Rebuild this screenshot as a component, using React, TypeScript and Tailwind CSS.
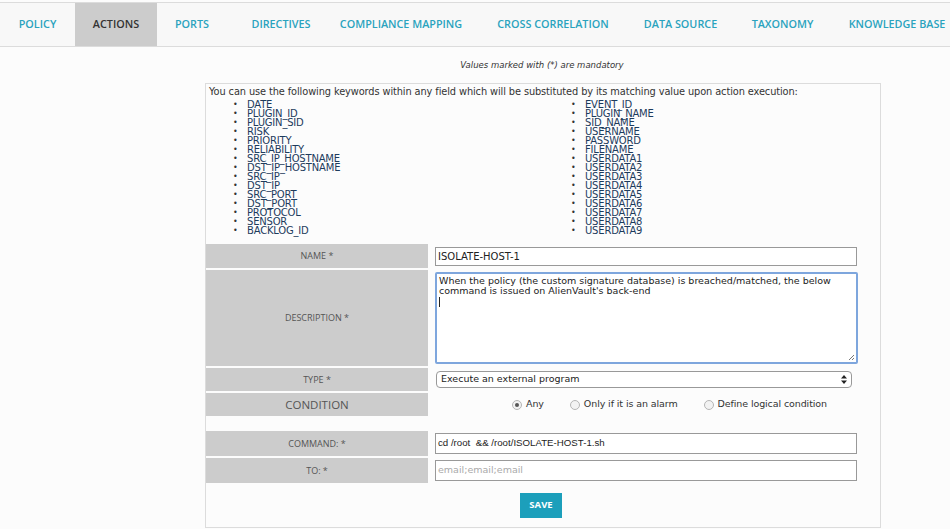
import React from "react";

const tabs = [
  { t: "POLICY", w: 75 },
  { t: "ACTIONS", w: 82, active: true },
  { t: "PORTS", w: 70 },
  { t: "DIRECTIVES", w: 108 },
  { t: "COMPLIANCE MAPPING", w: 132 },
  { t: "CROSS CORRELATION", w: 172 },
  { t: "DATA SOURCE", w: 83 },
  { t: "TAXONOMY", w: 121 },
  { t: "KNOWLEDGE BASE", w: 108 },
];

const left = [
  "DATE",
  "PLUGIN_ID",
  "PLUGIN_SID",
  "RISK",
  "PRIORITY",
  "RELIABILITY",
  "SRC_IP_HOSTNAME",
  "DST_IP_HOSTNAME",
  "SRC_IP",
  "DST_IP",
  "SRC_PORT",
  "DST_PORT",
  "PROTOCOL",
  "SENSOR",
  "BACKLOG_ID",
];
const right = [
  "EVENT_ID",
  "PLUGIN_NAME",
  "SID_NAME",
  "USERNAME",
  "PASSWORD",
  "FILENAME",
  "USERDATA1",
  "USERDATA2",
  "USERDATA3",
  "USERDATA4",
  "USERDATA5",
  "USERDATA6",
  "USERDATA7",
  "USERDATA8",
  "USERDATA9",
];

const lucida = { fontFamily: '"DejaVu Sans", Verdana, sans-serif' };
const open = { fontFamily: '"Open Sans", sans-serif' };

function KwList({ items, className }: { items: string[]; className: string }) {
  return (
    <ul className={className}>
      {items.map((k) => (
        <li key={k} className="flex h-[9px] items-center leading-[9px]">
          <span className="w-[14px] text-[#333] text-[8px]">•</span>
          <span className="text-[#1d3b5c] text-[10px] tracking-[-0.2px]">{k}</span>
        </li>
      ))}
    </ul>
  );
}

function Label({ children, big }: { children: React.ReactNode; big?: boolean }) {
  return (
    <div
      className={`w-[222px] shrink-0 bg-[#cccccc] flex items-center justify-center text-[#555] ${
        big ? "text-[11.5px]" : "text-[9px]"
      }`}
      style={open}
    >
      {children}
    </div>
  );
}

function Radio({ checked, label }: { checked?: boolean; label: string }) {
  return (
    <span className="flex items-center gap-[4px]">
      <span className="w-[10px] h-[10px] rounded-full border border-[#b5b5b5] bg-[#f2f2f2] flex items-center justify-center">
        {checked && <span className="w-[4px] h-[4px] rounded-full bg-[#555]" />}
      </span>
      <span className="text-[9.5px] text-[#333] tracking-[-0.1px]">{label}</span>
    </span>
  );
}

export default function App() {
  return (
    <div className="w-[950px] h-[529px] bg-[#fcfcfc] overflow-hidden" style={open}>
      <div className="mt-[2px] h-[45px] flex border-t border-b border-[#dcdcdc] bg-[#f8f8f8]">
        {tabs.map((t) => (
          <div
            key={t.t}
            className={`shrink-0 flex items-center justify-center text-[10.8px] font-semibold whitespace-nowrap ${
              t.active ? "bg-[#cccccc] text-[#333]" : "text-[#2aa3be]"
            }`}
            style={{ width: t.w }}
          >
            {t.t}
          </div>
        ))}
      </div>

      <div
        className="h-[36px] flex items-center justify-center pl-[134px] text-[8.5px] italic text-[#333]"
        style={lucida}
      >
        Values marked with (*) are mandatory
      </div>

      <div className="ml-[205px] w-[676px] h-[445px] border border-[#dcdcdc] bg-[#fcfcfc] flex flex-col">
        <div style={lucida}>
          <div className="pl-[3px] pt-[2px] text-[9.8px] text-[#333] leading-[12px] tracking-[-0.1px] whitespace-nowrap">
            You can use the following keywords within any field which will be substituted by its matching value upon
            action execution:
          </div>
          <div className="flex pt-[2px]">
            <KwList items={left} className="pl-[27px] w-[365px]" />
            <KwList items={right} className="" />
          </div>
        </div>

        <div className="mt-[9px] flex flex-col gap-[2px]" style={lucida}>
          <div className="flex h-[24px]">
            <Label>NAME *</Label>
            <div className="flex-1 pl-[7px] flex items-center">
              <div className="w-[422px] h-[19px] border border-[#999] bg-white flex items-center pl-[2px] text-[10px] text-[#222]">
                ISOLATE-HOST-1
              </div>
            </div>
          </div>

          <div className="flex h-[96px]">
            <Label>DESCRIPTION *</Label>
            <div className="flex-1 pl-[7px] flex items-center">
              <div className="relative w-[423px] h-[92px] border-[2px] border-[#7ea6dd] rounded-[2px] bg-white px-[2px] pt-[2px] text-[9.5px] leading-[10px] text-[#222]">
                When the policy (the custom signature database) is breached/matched, the below command is issued on
                AlienVault's back-end
                <div className="w-px h-[10px] bg-[#222] mt-[1px]" />
                <svg className="absolute right-[1px] bottom-[1px]" width="7" height="7" viewBox="0 0 7 7">
                  <path d="M6 1 L1 6 M6 4 L4 6" stroke="#777" strokeWidth="1" />
                </svg>
              </div>
            </div>
          </div>

          <div className="flex h-[23px]">
            <Label>TYPE *</Label>
            <div className="flex-1 pl-[8px] flex items-center">
              <div className="w-[416px] h-[17px] border border-[#999] rounded-[4px] bg-white flex items-center justify-between pl-[4px] pr-[4px] text-[9.5px] text-[#222]">
                <span>Execute an external program</span>
                <svg width="6" height="9" viewBox="0 0 6 9">
                  <path d="M3 0 L6 3.5 H0 Z M3 9 L0 5.5 H6 Z" fill="#222" />
                </svg>
              </div>
            </div>
          </div>

          <div className="flex h-[23px]">
            <Label big>CONDITION</Label>
            <div className="flex-1 flex items-center pl-[84px] gap-[26px]">
              <Radio checked label="Any" />
              <Radio label="Only if it is an alarm" />
              <Radio label="Define logical condition" />
            </div>
          </div>

          <div className="h-[11px]" />

          <div className="flex h-[25px]">
            <Label>COMMAND: *</Label>
            <div className="flex-1 pl-[7px] flex items-center">
              <div
                className="w-[422px] h-[21px] border border-[#999] bg-white flex items-center pl-[2px] text-[9.7px] text-[#222] whitespace-pre"
                style={{ fontFamily: '"Liberation Sans", Arial, sans-serif' }}
              >
                cd /root  &amp;&amp; /root/ISOLATE-HOST-1.sh
              </div>
            </div>
          </div>

          <div className="flex h-[25px]">
            <Label>TO: *</Label>
            <div className="flex-1 pl-[7px] flex items-center">
              <div className="w-[422px] h-[21px] border border-[#999] bg-white flex items-center pl-[2px] text-[9.5px] text-[#aaa]">
                email;email;email
              </div>
            </div>
          </div>
        </div>

        <div className="mt-[10px] flex justify-center pr-[4px]">
          <div
            className="w-[42px] h-[25px] bg-[#1c9fbb] text-white text-[9.5px] font-bold flex items-center justify-center"
            style={open}
          >
            SAVE
          </div>
        </div>
      </div>
    </div>
  );
}
